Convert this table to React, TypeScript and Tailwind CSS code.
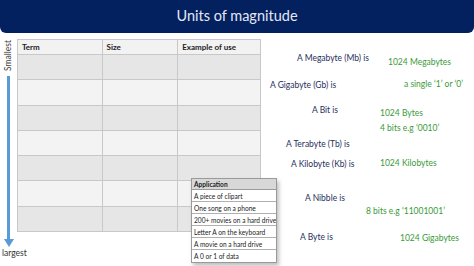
const rows = ['', '', '', '', '', '', ''];

const labels = [
  { text: 'A Megabyte (Mb) is', pos: 'left-[297px] top-[53px]' },
  { text: 'A Gigabyte (Gb) is', pos: 'left-[270px] top-[80px]' },
  { text: 'A Bit is', pos: 'left-[312px] top-[105px]' },
  { text: 'A Terabyte (Tb) is', pos: 'left-[286px] top-[139px]' },
  { text: 'A Kilobyte (Kb) is', pos: 'left-[291px] top-[159px]' },
  { text: 'A Nibble is', pos: 'left-[305px] top-[193px]' },
  { text: 'A Byte is', pos: 'left-[300px] top-[232px]' },
];

const answers = [
  { text: '1024 Megabytes', pos: 'left-[388px] top-[57px]' },
  { text: 'a single \u20181\u2019 or \u20180\u2019', pos: 'left-[404px] top-[79px]' },
  { text: '1024 Bytes', pos: 'left-[380px] top-[108px]' },
  { text: '4 bits e.g \u20180010\u2019', pos: 'left-[380px] top-[123px]' },
  { text: '1024 Kilobytes', pos: 'left-[380px] top-[158px]' },
  { text: '8 bits e.g \u201811001001\u2019', pos: 'left-[366px] top-[206px]' },
  { text: '1024 Gigabytes', pos: 'left-[400px] top-[233px]' },
];

const apps = [
  'A piece of clipart',
  'One song on a phone',
  '200+ movies on a hard drive',
  'Letter A on the keyboard',
  'A movie on a hard drive',
  'A 0 or 1 of data',
];

export default function App() {
  return (
    <div className="relative w-[474px] h-[266px] bg-white overflow-hidden font-['Lato',sans-serif]">
      {/* Title bar */}
      <header className="h-[33px] bg-[#03205f] rounded-b-[6px] flex items-center justify-center">
        <h1 className="text-[14.5px] text-[#e3e8f6] leading-none">Units of magnitude</h1>
      </header>

      <main className="flex items-start pt-[6px]">
        {/* Smallest -> largest arrow */}
        <div className="w-[17px] flex flex-col items-center">
          <span className="[writing-mode:vertical-rl] rotate-180 text-[8.5px] leading-none text-[#404040] h-[34px] text-center">
            Smallest
          </span>
          <div className="mt-[3px] w-[3px] h-[164px] bg-[#5b9bd5]" />
          <svg width="10" height="8" viewBox="0 0 10 8" className="-mt-[1px]">
            <path d="M0 0 L10 0 L5 8 Z" fill="#5b9bd5" />
          </svg>
          <span className="mt-[2px] ml-[2px] self-start text-[8.5px] leading-none text-[#333] whitespace-nowrap">largest</span>
        </div>

        {/* Table */}
        <table className="border-collapse w-[244px] text-[8px] text-[#222] border border-[#d0d0d0]">
          <thead>
            <tr className="h-[15px] bg-[#f2f2f2]">
              <th className="w-[85px] text-left font-bold px-[4px] border border-[#c8c8c8]">Term</th>
              <th className="w-[76px] text-left font-bold px-[4px] border border-[#c8c8c8]">Size</th>
              <th className="w-[83px] text-left font-bold px-[4px] border border-[#c8c8c8]">Example of use</th>
            </tr>
          </thead>
          <tbody>
            {rows.map((_, i) => (
              <tr key={i} className={i % 2 === 0 ? 'h-[25.3px] bg-[#e6e6e6]' : 'h-[25.3px] bg-[#f3f3f3]'}>
                <td className="border border-[#c8c8c8]" />
                <td className="border border-[#c8c8c8]" />
                <td className="border border-[#c8c8c8]" />
              </tr>
            ))}
          </tbody>
        </table>
      </main>

      {/* Terms to match */}
      {labels.map((l) => (
        <span key={l.text} className={`absolute ${l.pos} text-[8.5px] leading-[11px] text-[#1f2f5c] whitespace-nowrap`}>
          {l.text}
        </span>
      ))}
      {answers.map((a) => (
        <span key={a.text} className={`absolute ${a.pos} text-[8.5px] leading-[11px] text-[#3a9a3a] whitespace-nowrap`}>
          {a.text}
        </span>
      ))}

      {/* Application clipping */}
      <div className="absolute left-[191px] top-[178px] w-[86px] bg-white border border-[#9a9a9a] shadow-[2px_3px_4px_rgba(0,0,0,0.25)] text-[6.6px] text-[#222]">
        <div className="h-[11px] bg-[#d8d8d8] font-bold px-[2px] leading-[11px] border-b border-[#9a9a9a]">Application</div>
        {apps.map((a) => (
          <div key={a} className="h-[12px] px-[2px] leading-[12px] border-b border-[#b0b0b0] last:border-b-0 whitespace-nowrap overflow-hidden">
            {a}
          </div>
        ))}
      </div>
    </div>
  );
}
